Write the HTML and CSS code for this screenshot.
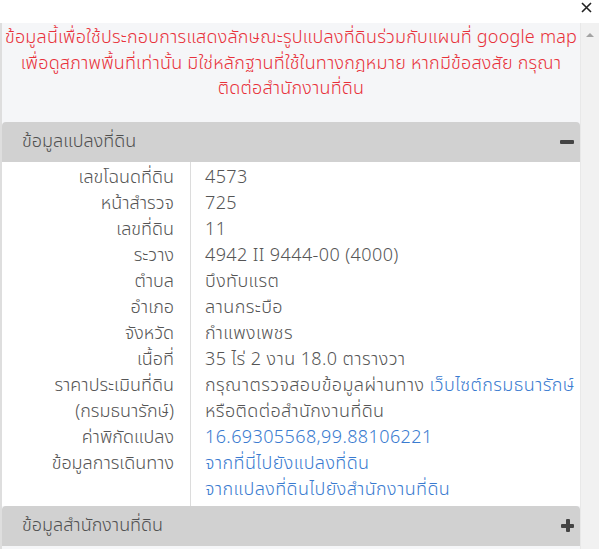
FILE: index.html
```html
<!DOCTYPE html>
<html lang="th">
<head>
<meta charset="UTF-8">
<meta name="viewport" content="width=device-width, initial-scale=1.0">
<title>ข้อมูลแปลงที่ดิน</title>
<link rel="stylesheet" href="styles.css">
</head>
<body>

<div class="popup">
    <div class="popup-top">
        <span class="close">
            <svg width="11" height="11" viewBox="0 0 11 11"><path d="M1 1L10 10M10 1L1 10" stroke="#222" stroke-width="1.6"/></svg>
        </span>
    </div>
    <div class="popup-body">
        <div class="content">
            <div class="notice">
                ข้อมูลนี้เพื่อใช้ประกอบการแสดงลักษณะรูปแปลงที่ดินร่วมกับแผนที่ google map<br>
                เพื่อดูสภาพพื้นที่เท่านั้น มิใช่หลักฐานที่ใช้ในทางกฎหมาย หากมีข้อสงสัย กรุณา<br>
                ติดต่อสำนักงานที่ดิน
            </div>

            <div class="panel">
                <div class="panel-head">
                    <span>ข้อมูลแปลงที่ดิน</span>
                    <span class="icon-minus"></span>
                </div>
                <table class="info">
                    <tr><td class="label">เลขโฉนดที่ดิน</td><td class="value">4573</td></tr>
                    <tr><td class="label">หน้าสำรวจ</td><td class="value">725</td></tr>
                    <tr><td class="label">เลขที่ดิน</td><td class="value">11</td></tr>
                    <tr><td class="label">ระวาง</td><td class="value">4942 II 9444-00 (4000)</td></tr>
                    <tr><td class="label">ตำบล</td><td class="value">บึงทับแรต</td></tr>
                    <tr><td class="label">อำเภอ</td><td class="value">ลานกระบือ</td></tr>
                    <tr><td class="label">จังหวัด</td><td class="value">กำแพงเพชร</td></tr>
                    <tr><td class="label">เนื้อที่</td><td class="value">35 ไร่ 2 งาน 18.0 ตารางวา</td></tr>
                    <tr><td class="label">ราคาประเมินที่ดิน<br>(กรมธนารักษ์)</td><td class="value">กรุณาตรวจสอบข้อมูลผ่านทาง <a href="#">เว็บไซต์กรมธนารักษ์</a><br>หรือติดต่อสำนักงานที่ดิน</td></tr>
                    <tr><td class="label">ค่าพิกัดแปลง</td><td class="value"><a href="#">16.69305568,99.88106221</a></td></tr>
                    <tr><td class="label">ข้อมูลการเดินทาง</td><td class="value"><a href="#">จากที่นี่ไปยังแปลงที่ดิน</a><br><a href="#">จากแปลงที่ดินไปยังสำนักงานที่ดิน</a></td></tr>
                </table>
            </div>

            <div class="panel">
                <div class="panel-head">
                    <span>ข้อมูลสำนักงานที่ดิน</span>
                    <span class="icon-plus"></span>
                </div>
            </div>
        </div>
        <div class="scrollbar">
            <svg width="18" height="22" viewBox="0 0 18 22"><path d="M5 14L9 10L13 14Z" fill="#a3a3a3"/></svg>
        </div>
    </div>
</div>

</body>
</html>
```

FILE: styles.css
```css
body {
    margin: 0;
    background: #ffffff;
    font-family: "Noto Sans Thai", "Noto Sans", sans-serif;
    font-weight: 300;
    color: #555;
}
.popup {
    width: 599px;
    height: 549px;
}
.popup-top {
    height: 23px;
    display: flex;
    justify-content: flex-end;
    align-items: center;
}
.close {
    display: flex;
    margin-right: 7px;
    margin-top: -8px;
}
.popup-body {
    height: 526px;
    display: flex;
    overflow: hidden;
    background: #f5f6f8;
    border-left: 2px solid #dedede;
}
.content {
    flex: 1;
    min-width: 0;
}
.scrollbar {
    width: 18px;
    background: #f1f1f1;
    border-left: 1px solid #e8e8e8;
}
.scrollbar svg {
    display: block;
}
.notice {
    color: #e8313a;
    font-size: 18px;
    line-height: 25.5px;
    letter-spacing: 0.2px;
    text-align: center;
    white-space: nowrap;
    padding: 2px 0 20px;
}
.panel-head {
    height: 40px;
    background: #d1d1d1;
    border-radius: 4px 4px 0 0;
    display: flex;
    justify-content: space-between;
    align-items: center;
    padding: 0 6px 0 20px;
    font-size: 18px;
    color: #505050;
}
.icon-minus {
    width: 14px;
    height: 4px;
    background: #444;
    border-radius: 1px;
}
.icon-plus {
    width: 13px;
    height: 13px;
    position: relative;
}
.icon-plus::before,
.icon-plus::after {
    content: "";
    position: absolute;
    background: #444;
    border-radius: 1px;
}
.icon-plus::before {
    left: 0;
    right: 0;
    top: 4.5px;
    height: 4px;
}
.icon-plus::after {
    top: 0;
    bottom: 0;
    left: 4.5px;
    width: 4px;
}
.info {
    width: 100%;
    background: #ffffff;
    border-collapse: collapse;
    font-size: 18px;
    line-height: 26px;
}
.info td {
    padding: 0;
    vertical-align: top;
    white-space: nowrap;
}
.info tr:first-child td {
    padding-top: 3px;
}
.info tr:last-child td {
    padding-bottom: 3px;
}
.info .label {
    width: 172px;
    text-align: right;
    padding-right: 16px;
    border-right: 1px solid #dcdcdc;
}
.info .value {
    padding-left: 14px;
    letter-spacing: 0.4px;
}
.info a {
    color: #3a7bd0;
    text-decoration: none;
}
```
